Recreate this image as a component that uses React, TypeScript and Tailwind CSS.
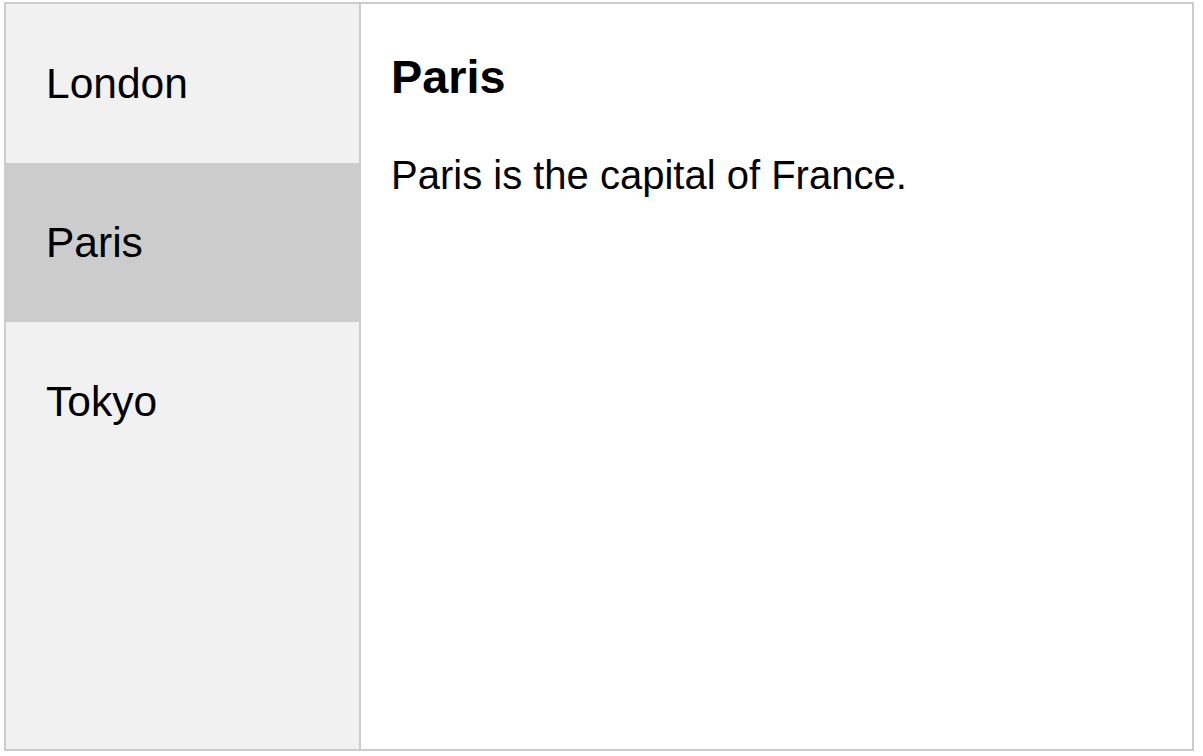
import * as React from 'react';

const cities = [
  { name: 'London', text: 'London is the capital city of England.' },
  { name: 'Paris', text: 'Paris is the capital of France.' },
  { name: 'Tokyo', text: 'Tokyo is the capital of Japan.' },
];

export default function App() {
  const [active, setActive] = React.useState('Paris');
  const city = cities.find((c) => c.name === active)!;

  return (
    <div className="pl-[4px] pt-[2px] bg-white" style={{ fontFamily: '"Liberation Sans", Arial, sans-serif' }}>
      <div className="flex w-[1190px] h-[749px]">
        <div className="w-[357px] h-full border-2 border-[#cccccc] bg-[#f1f1f1] flex flex-col">
          {cities.map((c) => (
            <button
              key={c.name}
              onClick={() => setActive(c.name)}
              className={`w-full text-left px-[40px] py-[55px] text-[42.5px] leading-[49px] text-black outline-none ${
                active === c.name ? 'bg-[#cccccc]' : 'bg-transparent hover:bg-[#dddddd]'
              }`}
            >
              {c.name}
            </button>
          ))}
        </div>
        <div className="flex-1 h-full border-2 border-l-0 border-[#cccccc] px-[30px] text-black">
          <h3 className="mt-[46px] text-[46.8px] font-bold leading-[normal]">{city.name}</h3>
          <p className="mt-[49px] text-[40px] leading-[normal]">{city.text}</p>
        </div>
      </div>
    </div>
  );
}
